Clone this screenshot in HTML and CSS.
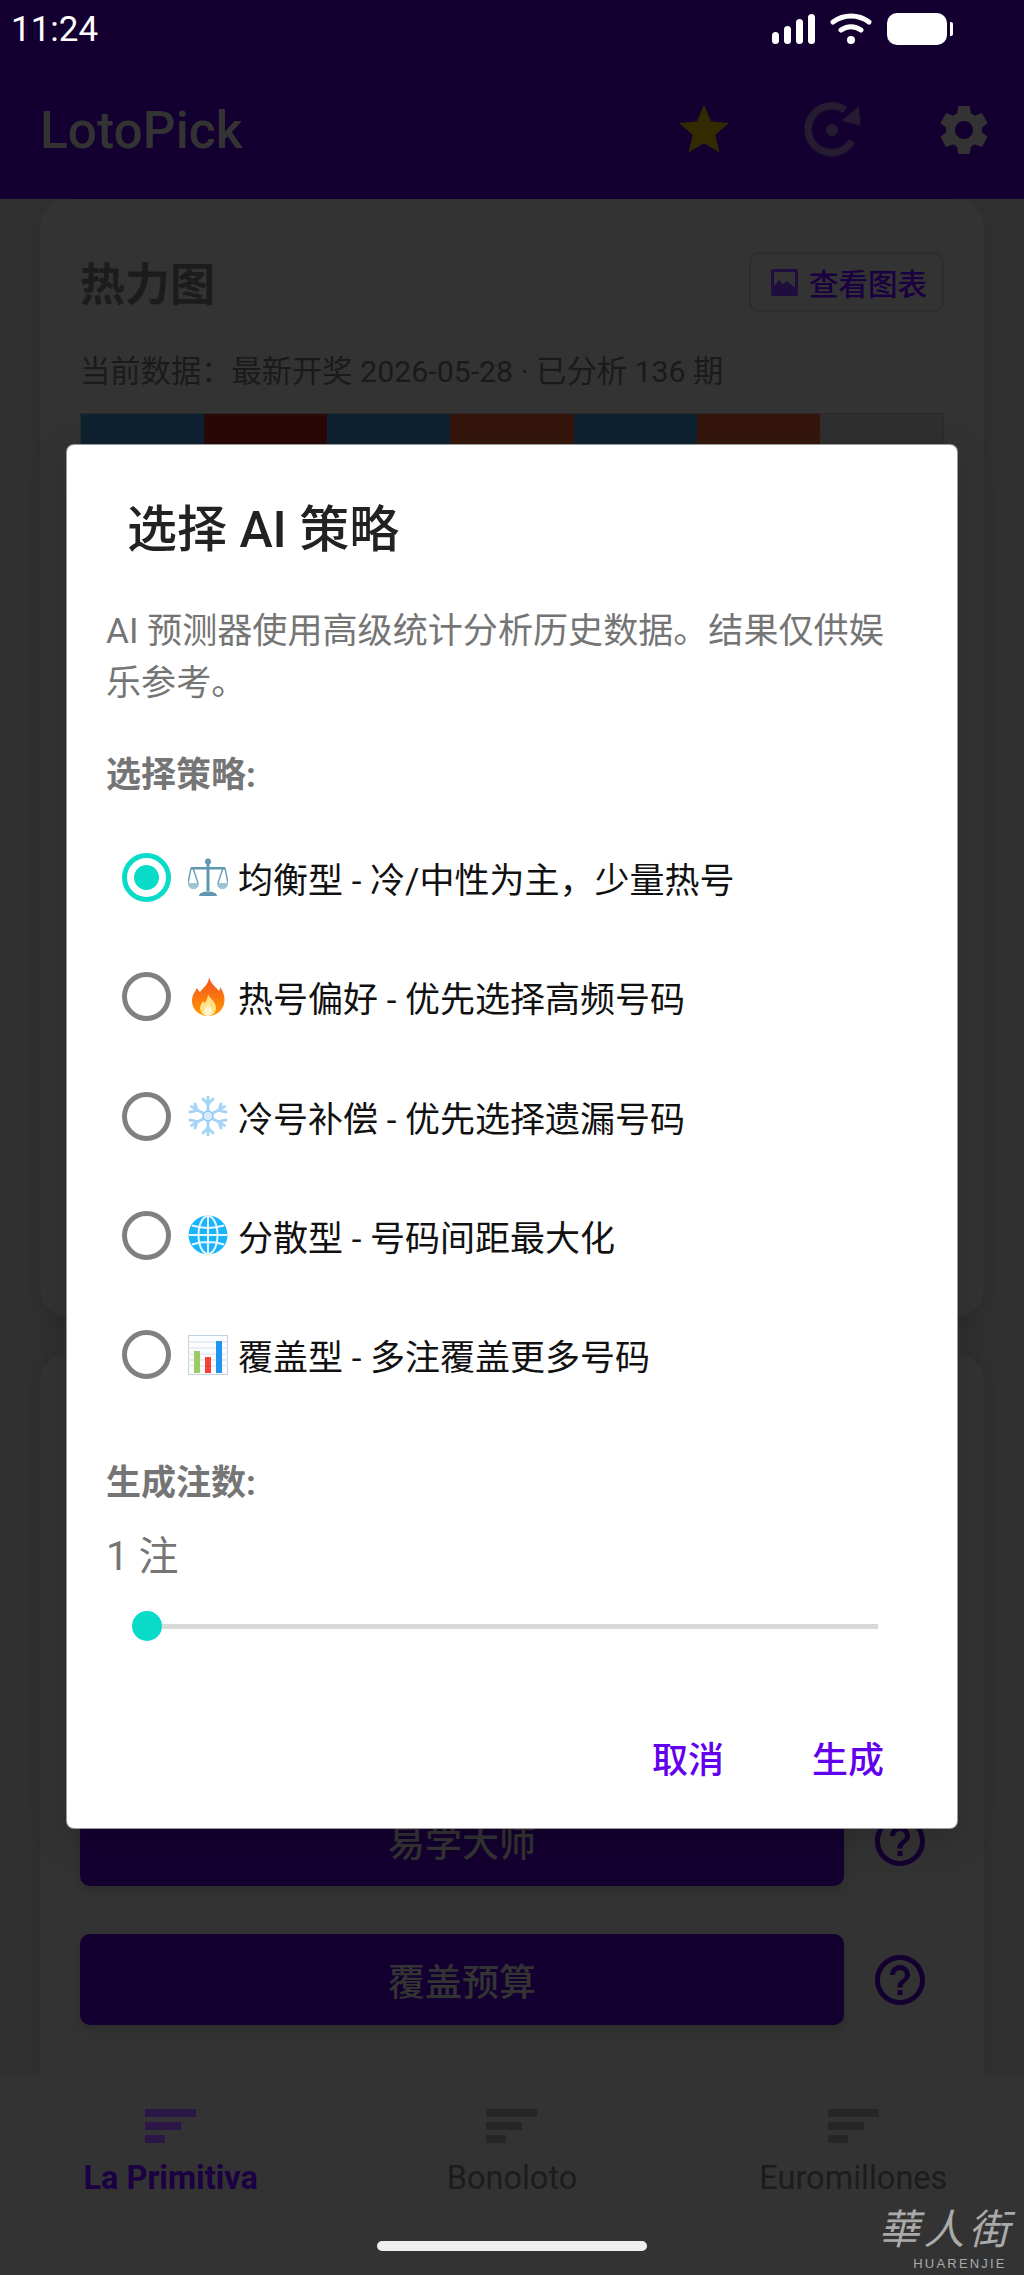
FILE: index.html
```html
<!DOCTYPE html>
<html>
<head>
<meta charset="utf-8" />
<title>LotoPick</title>
<link rel="stylesheet" href="styles.css">
</head>
<body>
<div class="app">

    <!-- header -->
    <div class="top">
        <div class="status">
            <span class="time">11:24</span>
            <div class="status-icons">
                <svg class="sig" viewBox="0 0 43 30"><rect x="0" y="18" width="7" height="12" rx="3.5"/><rect x="12" y="12" width="7" height="18" rx="3.5"/><rect x="24" y="5" width="7" height="25" rx="3.5"/><rect x="36" y="0" width="7" height="30" rx="3.5"/></svg>
                <svg class="wifi" viewBox="0 0 42 32"><path d="M3 9C14 1 28 1 39 9M11 17c6-4.500 14-4.500 20 0" fill="none" stroke="#fff" stroke-width="5" stroke-linecap="round"/><circle cx="21" cy="27" r="4" fill="#fff"/></svg>
                <div class="batt"><span class="batt-body"></span><span class="batt-tip"></span></div>
            </div>
        </div>
        <div class="appbar">
            <span class="brand">LotoPick</span>
            <div class="actions">
                <svg class="ico" viewBox="0 0 24 24"><path fill="#332b00" d="M12 17.27L18.18 21l-1.64-7.03L22 9.24l-7.19-.61L12 2 9.19 8.63 2 9.24l5.46 4.73L5.82 21z"/></svg>
                <svg class="ico" viewBox="0 0 60 60">
                    <path d="M48 41A23.500 23.500 0 1 1 41 10" fill="none" stroke="#150530" stroke-width="10"/>
                    <path d="M48 41A23.500 23.500 0 1 1 41 10" fill="none" stroke="#251c33" stroke-width="7"/>
                    <path d="M55 6L57 26 37 21z" fill="#251c33" stroke="#150530"/>
                    <circle cx="28" cy="30" r="6" fill="#251c33"/>
                </svg>
                <svg class="ico" viewBox="0 0 24 24"><path fill="#333" d="M19.14 12.94c.04-.3.06-.61.06-.94 0-.32-.02-.64-.07-.94l2.03-1.58c.18-.14.23-.41.12-.61l-1.92-3.32c-.12-.22-.37-.29-.59-.22l-2.39.96c-.5-.38-1.03-.7-1.62-.94l-.36-2.54c-.04-.24-.24-.41-.48-.41h-3.840c-.24 0-.43.17-.47.41l-.36 2.54c-.59.24-1.13.57-1.62.94l-2.39-.96c-.22-.08-.47 0-.59.22L2.740 8.870c-.12.21-.08.47.12.61l2.030 1.580c-.05.3-.09.63-.09.94s.02.64.07.94l-2.030 1.580c-.18.14-.23.41-.12.61l1.920 3.320c.12.22.37.29.59.22l2.390-.96c.5.38 1.030.7 1.620.94l.36 2.540c.05.24.24.41.48.41h3.840c.24 0 .44-.17.47-.41l.36-2.540c.59-.24 1.130-.56 1.620-.94l2.390.96c.22.08.47 0 .59-.22l1.920-3.320c.12-.22.07-.47-.12-.61l-2.010-1.580zM12 15.600c-1.980 0-3.600-1.620-3.600-3.600s1.620-3.600 3.600-3.600 3.600 1.620 3.600 3.600-1.620 3.600-3.600 3.600z"/></svg>
            </div>
        </div>
    </div>

    <!-- cards -->
    <div class="main">
        <div class="card card-heat">
            <div class="card-head">
                <span class="card-title">热力图</span>
                <div class="chart-btn">
                    <svg class="chart-ico" viewBox="0 0 27 27"><path fill="#1f0d40" d="M0 2a2 2 0 0 1 2-2h23a2 2 0 0 1 2 2v23a2 2 0 0 1-2 2H2a2 2 0 0 1-2-2zM3 3v14l5-6 4 4 4-3 8 7V3z"/></svg>
                    <span>查看图表</span>
                </div>
            </div>
            <div class="card-sub">当前数据：最新开奖 2026-05-28 · 已分析 136 期</div>
            <div class="heat">
                <div class="cell c-blue"></div>
                <div class="cell c-red"></div>
                <div class="cell c-blue"></div>
                <div class="cell c-orange"></div>
                <div class="cell c-blue"></div>
                <div class="cell c-orange"></div>
                <div class="cell c-grey"></div>
            </div>
        </div>

        <div class="card card-btns">
            <div class="btn-row">
                <div class="big-btn">易学大师</div>
                <svg class="ico" viewBox="0 0 24 24"><path fill="#140030" d="M11 18h2v-2h-2v2zm1-16C6.480 2 2 6.480 2 12s4.480 10 10 10 10-4.480 10-10S17.520 2 12 2zm0 18c-4.410 0-8-3.590-8-8s3.590-8 8-8 8 3.590 8 8-3.590 8-8 8zm0-14c-2.210 0-4 1.790-4 4h2c0-1.100.9-2 2-2s2 .9 2 2c0 2-3 1.750-3 5h2c0-2.250 3-2.500 3-5 0-2.210-1.790-4-4-4z"/></svg>
            </div>
            <div class="btn-row">
                <div class="big-btn">覆盖预算</div>
                <svg class="ico" viewBox="0 0 24 24"><path fill="#140030" d="M11 18h2v-2h-2v2zm1-16C6.480 2 2 6.480 2 12s4.480 10 10 10 10-4.480 10-10S17.520 2 12 2zm0 18c-4.410 0-8-3.590-8-8s3.590-8 8-8 8 3.590 8 8-3.590 8-8 8zm0-14c-2.210 0-4 1.790-4 4h2c0-1.100.9-2 2-2s2 .9 2 2c0 2-3 1.750-3 5h2c0-2.250 3-2.500 3-5 0-2.210-1.790-4-4-4z"/></svg>
            </div>
        </div>
    </div>

    <!-- bottom nav -->
    <div class="nav">
        <div class="tab tab-on">
            <div class="bars"><i class="b1"></i><i class="b2"></i><i class="b3"></i></div>
            <span>La Primitiva</span>
        </div>
        <div class="tab">
            <div class="bars"><i class="b1"></i><i class="b2"></i><i class="b3"></i></div>
            <span>Bonoloto</span>
        </div>
        <div class="tab">
            <div class="bars"><i class="b1"></i><i class="b2"></i><i class="b3"></i></div>
            <span>Euromillones</span>
        </div>
    </div>
</div>

<div class="home-bar"></div>
<div class="mark">
    <div class="mark-cn">華人街</div>
    <div class="mark-en">HUARENJIE</div>
</div>

<!-- dialog -->
<div class="dialog">
    <div class="dlg-title">选择 AI 策略</div>
    <div class="dlg-text">AI 预测器使用高级统计分析历史数据。结果仅供娱乐参考。</div>
    <div class="dlg-label">选择策略:</div>

    <div class="opts">
        <div class="opt">
            <span class="radio radio-on"></span>
            <svg class="emoji" viewBox="0 0 40 40">
                <g fill="none" stroke="#6fa3b8" stroke-width="1.500">
                    <path d="M3 10l-3 15M5 10l5 15M35 10l-5 15M37 10l3 15"/>
                </g>
                <path d="M0 25h11c0 4-2.500 6-5.500 6S0 29 0 25zM29 25h11c0 4-2.500 6-5.500 6S29 29 29 25z" fill="#9cc4d2"/>
                <path d="M3 9h34v2.500H3z" fill="#5f97ae"/>
                <path d="M18.500 4h3v29h-3z" fill="#5f97ae"/>
                <circle cx="20" cy="3.500" r="3" fill="#5f97ae"/>
                <path d="M11 38c0-3 4-4.500 9-4.500s9 1.500 9 4.500z" fill="#5f97ae"/>
            </svg>
            <span class="opt-text">均衡型 - 冷/中性为主，少量热号</span>
        </div>
        <div class="opt">
            <span class="radio"></span>
            <svg class="emoji" viewBox="0 0 40 40">
                <defs>
                    <linearGradient id="fl" x1="0" y1="0" x2="0" y2="1"><stop offset="0" stop-color="#f4511e"/><stop offset="1" stop-color="#ff9800"/></linearGradient>
                </defs>
                <path d="M21 0c2 7 6 9 10 14 1-1 1-3 1-4 3 4 4.500 8 4.500 13 0 9-7 16-16.500 16S4 32 4 24c0-6 3-9 5-13 1 2 2 3 3 4 3-4 9-8 9-15z" fill="url(#fl)"/>
                <path d="M20 17c1 4 8 7 8 14 0 5-4 8-8 8s-8-3-8-8c0-3 2-5 3-7 1 1 1.500 2 2 2 1-2 3-5 3-9z" fill="#ffe082"/>
                <path d="M20 27c1 2 4 3 4 7 0 3-2 5-4 5s-4-2-4-5c0-3 3-4 4-7z" fill="#fff3d0"/>
            </svg>
            <span class="opt-text">热号偏好 - 优先选择高频号码</span>
        </div>
        <div class="opt">
            <span class="radio"></span>
            <svg class="emoji" viewBox="0 0 40 40">
                <g stroke="#a6d4f5" stroke-width="3" fill="none" stroke-linecap="round">
                    <path d="M20 1v38M3.500 10.500l33 19M3.500 29.500l33-19"/>
                    <path d="M15 3l5 5 5-5M15 37l5-5 5 5M2 16l7-1.500L7 8M38 16l-7-1.500L33 8M2 24l7 1.500L7 32M38 24l-7 1.500L33 32"/>
                </g>
                <circle cx="20" cy="20" r="5" fill="#d5ecfb" stroke="#8ec7f0" stroke-width="1.500"/>
            </svg>
            <span class="opt-text">冷号补偿 - 优先选择遗漏号码</span>
        </div>
        <div class="opt">
            <span class="radio"></span>
            <svg class="emoji" viewBox="0 0 40 40">
                <circle cx="20" cy="20" r="19.500" fill="#1ab4fb"/>
                <g fill="none" stroke="#e8f7ff" stroke-width="2">
                    <ellipse cx="20" cy="20" rx="9.500" ry="19"/>
                    <path d="M20 1v38M1 20h38M4 10.500c10 3 22 3 32 0M4 29.500c10-3 22-3 32 0"/>
                </g>
            </svg>
            <span class="opt-text">分散型 - 号码间距最大化</span>
        </div>
        <div class="opt">
            <span class="radio"></span>
            <svg class="emoji" viewBox="0 0 40 40">
                <rect x="0.500" y="0.500" width="39" height="39" fill="#fbfcfd" stroke="#c5d3de"/>
                <path d="M0 7h40M0 13h40M0 19h40M0 25h40M0 31h40" stroke="#d8e1e8"/>
                <rect x="6" y="16" width="6" height="22" fill="#9ccc65"/>
                <rect x="17" y="22" width="6" height="16" fill="#f44336"/>
                <rect x="28" y="6" width="6" height="32" fill="#1e96f0"/>
            </svg>
            <span class="opt-text">覆盖型 - 多注覆盖更多号码</span>
        </div>
    </div>

    <div class="dlg-label dlg-label2">生成注数:</div>
    <div class="count">1 注</div>
    <div class="slider"><span class="thumb"></span><span class="track"></span></div>

    <div class="dlg-btns">
        <span>取消</span>
        <span>生成</span>
    </div>
</div>
</body>
</html>
```

FILE: styles.css
```css
*,*:before,*:after{box-sizing:border-box;}
html,body{margin:0;padding:0;}
body{width:1024px;height:2275px;overflow:hidden;position:relative;background:#303030;font-family:Roboto,"Noto Sans CJK SC",sans-serif;}
.app{height:2275px;display:flex;flex-direction:column;}

/* header */
.top{height:199px;background:#140030;flex:none;}
.status{height:58px;padding:10px 71px 0 11px;display:flex;justify-content:space-between;align-items:flex-start;}
.time{color:#fff;font-size:35px;line-height:40px;}
.status-icons{display:flex;align-items:center;gap:15px;padding-top:3px;}
.sig{width:43px;height:30px;fill:#fff;}
.wifi{width:42px;height:32px;}
.batt{display:flex;align-items:center;gap:3px;}
.batt-body{width:60px;height:32px;border-radius:10px;background:#fff;}
.batt-tip{width:3px;height:14px;background:#fff;border-radius:0 2px 2px 0;}
.appbar{display:flex;align-items:center;justify-content:space-between;padding:41px 30px 0 40px;}
.brand{color:#333;font-size:51.500px;font-weight:500;line-height:60px;margin-top:2px;}
.actions{display:flex;gap:70px;}
.ico{width:60px;height:60px;display:block;flex:none;}

/* cards */
.main{flex:1;min-height:0;padding:0 40px;display:flex;flex-direction:column;gap:36px;overflow:hidden;}
.card{background:#333;border-radius:28px;box-shadow:0 4px 12px rgba(0,0,0,.08);}
.card-heat{height:1118px;flex:none;padding:53px 40px 0;}
.card-head{display:flex;justify-content:space-between;align-items:center;height:60px;}
.card-title{font-size:45px;font-weight:700;color:#1c1c1c;line-height:60px;position:relative;top:4px;}
.chart-btn{width:195px;height:60px;border:2px solid #2d2d2d;border-radius:10px;display:flex;align-items:center;padding-left:20px;gap:11px;color:#1a0040;font-size:29.500px;font-weight:500;}
.chart-ico{width:27px;height:27px;}
.card-sub{margin-top:40px;font-size:30.300px;line-height:40px;color:#1a1a1a;}
.heat{margin-top:21px;height:100px;display:grid;grid-template-columns:repeat(7,1fr);border:1px solid #2a2a2a;}
.c-blue{background:#0f2232;}
.c-red{background:#2b0808;}
.c-orange{background:#35160c;}
.c-grey{background:#2f2f2f;}
.card-btns{flex:1;min-height:0;border-radius:28px 28px 0 0;padding:0 54px 50px 40px;display:flex;flex-direction:column;justify-content:flex-end;gap:48px;}
.btn-row{display:flex;align-items:center;gap:26px;}
.big-btn{flex:1;height:91px;background:#140030;border-radius:10px;color:#333;font-size:37px;font-weight:500;display:flex;align-items:center;justify-content:center;box-shadow:0 5px 10px rgba(0,0,0,.14);}

/* bottom nav */
.nav{height:200px;flex:none;background:#333;display:flex;padding-top:34px;}
.tab{flex:1;display:flex;flex-direction:column;align-items:center;color:#1c1c1c;font-size:32.500px;line-height:40px;}
.tab span{margin-top:15px;}
.bars{width:51px;display:flex;flex-direction:column;gap:5px;}
.bars i{display:block;height:8px;background:#262626;}
.bars .b1{width:51px;}
.bars .b2{width:36px;}
.bars .b3{width:20px;}
.tab-on{color:#1b0042;font-weight:700;}
.tab-on .bars i{background:#2b1647;}

.home-bar{position:absolute;left:377px;top:2241px;width:270px;height:10px;border-radius:5px;background:#eee;}
.mark{position:absolute;left:876px;top:2196px;width:140px;color:#aaa;text-align:center;}
.mark-cn{font-family:"Noto Sans CJK TC",sans-serif;font-size:41px;line-height:60px;letter-spacing:4px;font-style:italic;}
.mark-en{font-family:"Liberation Sans",sans-serif;font-size:13px;line-height:15px;letter-spacing:2.200px;padding-left:28px;}

/* dialog */
.dialog{position:absolute;left:67px;top:445px;width:890px;height:1383px;background:#fff;border-radius:7px;padding:55px 73px 0 39px;box-shadow:0 0 0 1px #999,0 10px 40px rgba(0,0,0,.18);}
.dlg-title{padding-left:21px;font-size:50px;font-weight:500;line-height:60px;color:#222;}
.dlg-text{margin-top:45px;font-size:35.100px;line-height:52px;color:#757575;}
.dlg-label{margin-top:42px;font-size:35px;font-weight:700;line-height:50px;color:#757575;}
.dlg-label2{margin-top:45px;}
.opts{margin-top:17px;}
.opt{height:119.250px;display:flex;align-items:center;padding-left:10px;}
.radio{width:60px;height:60px;flex:none;position:relative;}
.radio:before{content:'';position:absolute;left:5.500px;top:5.500px;width:49px;height:49px;border:5px solid #808080;border-radius:50%;}
.radio-on:before{border-color:#08dcc8;}
.radio-on:after{content:'';position:absolute;left:17.500px;top:17.500px;width:25px;height:25px;background:#08dcc8;border-radius:50%;}
.emoji{width:40px;height:40px;margin-left:12px;flex:none;}
.opt-text{margin-left:10px;font-size:35px;color:#111;white-space:nowrap;}
.count{margin-top:22px;font-size:40px;line-height:52px;color:#757575;}
.slider{margin:28px 0 0 26px;width:746px;height:30px;display:flex;align-items:center;}
.thumb{width:30px;height:30px;border-radius:50%;background:#08dcc8;flex:none;}
.track{flex:1;height:5px;background:#d9d9d9;}
.dlg-btns{margin-top:95px;display:flex;justify-content:flex-end;gap:88px;font-size:36px;font-weight:500;line-height:50px;color:#6200ee;}
```
